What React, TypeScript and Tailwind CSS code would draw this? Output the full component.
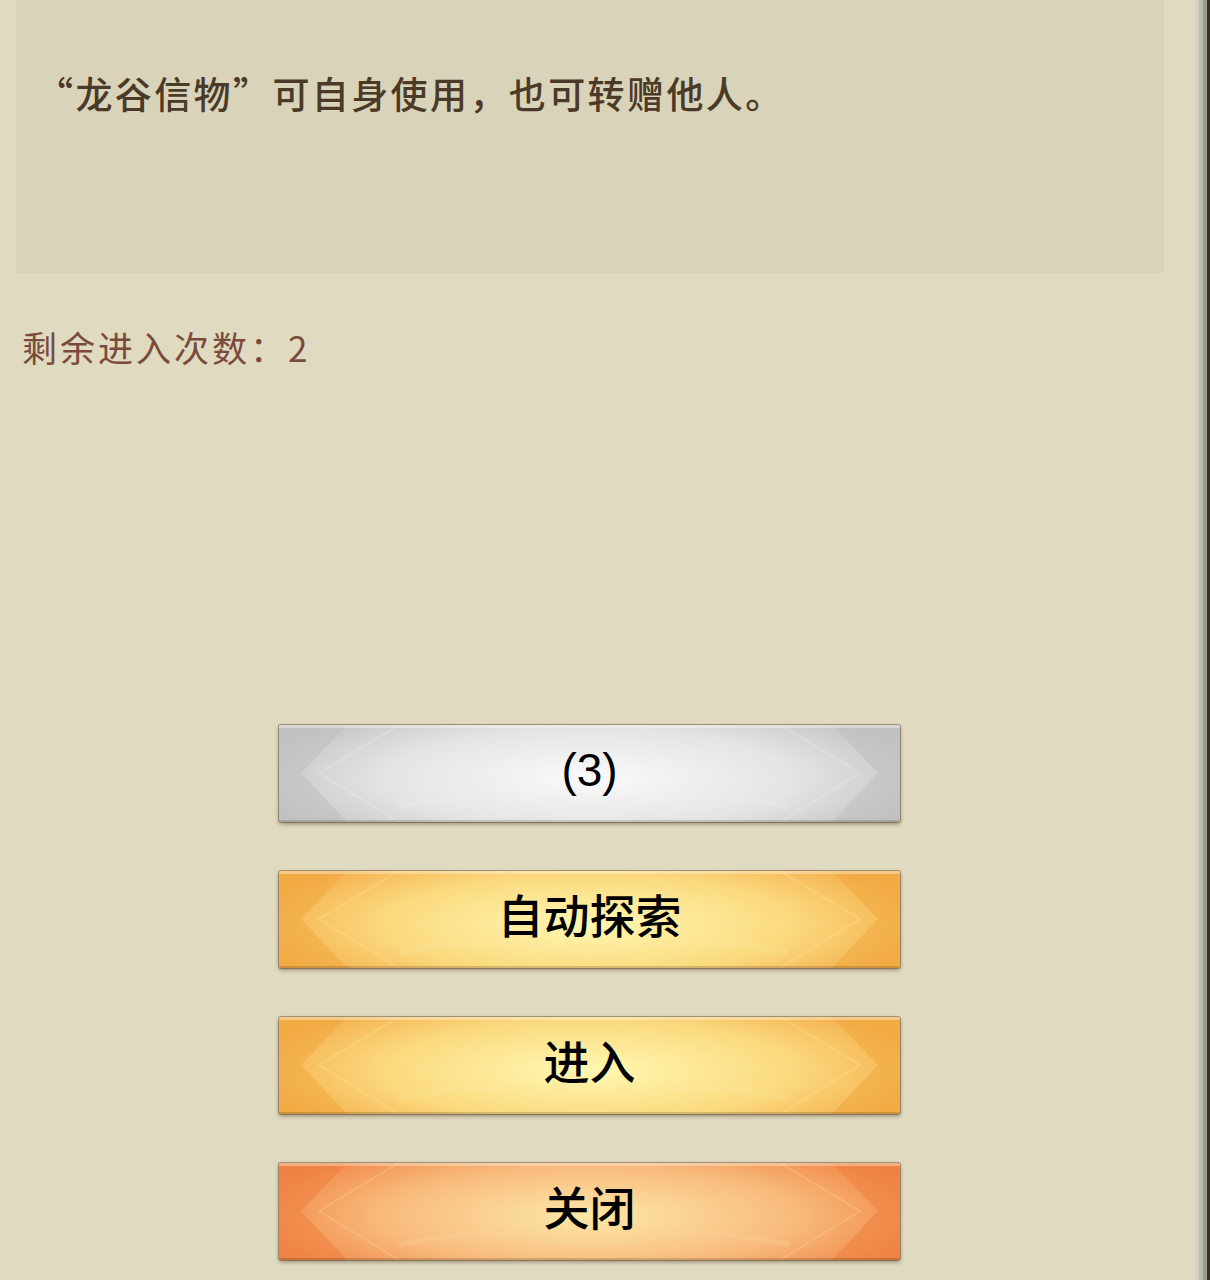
const FONT = '"Noto Sans CJK SC", "Noto Sans", sans-serif';

type Variant = "gray" | "yellow" | "orange";

const palettes: Record<Variant, { edge: string; mid: string; center: string; dark: string; line: string }> = {
  gray: { edge: "#c4c4c4", mid: "#e4e4e4", center: "#fafafa", dark: "#bdbdbd", line: "#f0f0f0" },
  yellow: { edge: "#f4ae4a", mid: "#fbd97e", center: "#fff8b2", dark: "#f0a63e", line: "#fde6a0" },
  orange: { edge: "#f18848", mid: "#f8bb7c", center: "#fde8a8", dark: "#ee7e3e", line: "#fbd2a0" },
};

const GameButton = ({ label, variant, latin }: { label: string; variant: Variant; latin?: boolean }) => {
  const p = palettes[variant];
  return (
    <div
      className="relative w-[621px] h-[97px] rounded-[2px] shadow-[0_0_0_1px_rgba(90,70,40,0.45),0_2px_4px_rgba(60,40,20,0.45)] overflow-hidden flex items-center justify-center"
      style={{
        background: `radial-gradient(ellipse 55% 85% at 50% 55%, ${p.center} 0%, ${p.mid} 60%, ${p.edge} 100%)`,
      }}
    >
      <svg className="absolute inset-0" width="621" height="97" viewBox="0 0 621 97" preserveAspectRatio="none">
        <polygon points="0,0 68,0 22,48 68,97 0,97" fill={p.dark} opacity="0.5" />
        <polygon points="621,0 553,0 599,48 553,97 621,97" fill={p.dark} opacity="0.5" />
        <polyline points="120,0 40,48 120,97" fill="none" stroke={p.line} strokeWidth="2" opacity="0.3" />
        <polyline points="501,0 581,48 501,97" fill="none" stroke={p.line} strokeWidth="2" opacity="0.3" />
        <path d="M120 82 Q200 62 300 80" fill="none" stroke={p.line} strokeWidth="6" opacity="0.25" />
        <path d="M330 80 Q430 62 510 82" fill="none" stroke={p.line} strokeWidth="6" opacity="0.25" />
      </svg>
      <div className="absolute left-0 right-0 top-0 h-[3px] bg-white/35" />
      <div className="absolute left-0 right-0 bottom-0 h-[2px] bg-black/15" />
      {latin ? (
        <span
          className="relative text-[46px] leading-none text-black -mt-[8px]"
          style={{ fontFamily: '"Liberation Sans", "Noto Sans CJK SC", sans-serif' }}
        >
          {label}
        </span>
      ) : (
        <span className="relative text-[46px] leading-none text-black font-medium -mt-[14px]">{label}</span>
      )}
    </div>
  );
};

export default function App() {
  return (
    <div className="w-[1210px] h-[1280px] flex bg-[#e0dac0] overflow-hidden" style={{ fontFamily: FONT }}>
      <div className="flex-1 flex flex-col">
        <div className="ml-[16px] mr-[31px] h-[273px] bg-[#d9d3ba] pl-[20px] pt-[71px]">
          <p className="text-[37px] leading-[44px] font-medium text-[#4a3a27] tracking-[2.4px]">
            “龙谷信物”可自身使用，也可转赠他人。
          </p>
        </div>
        <p className="mt-[54px] ml-[22px] text-[35px] leading-[40px] text-[#7a4a3c] tracking-[3px]">
          剩余进入次数：2
        </p>
        <div className="mt-[358px] ml-[279px] flex flex-col gap-[49px]">
          <GameButton label="(3)" variant="gray" latin />
          <GameButton label="自动探索" variant="yellow" />
          <GameButton label="进入" variant="yellow" />
          <GameButton label="关闭" variant="orange" />
        </div>
      </div>
      <div className="w-[15px] flex">
        <div className="w-[4px] bg-[#d4d4c0]" />
        <div className="w-[4px] bg-[#bcbcab]" />
        <div className="w-[4px] bg-[#9a9a8c]" />
        <div className="w-[3px] bg-[#3a3026]" />
      </div>
    </div>
  );
}
